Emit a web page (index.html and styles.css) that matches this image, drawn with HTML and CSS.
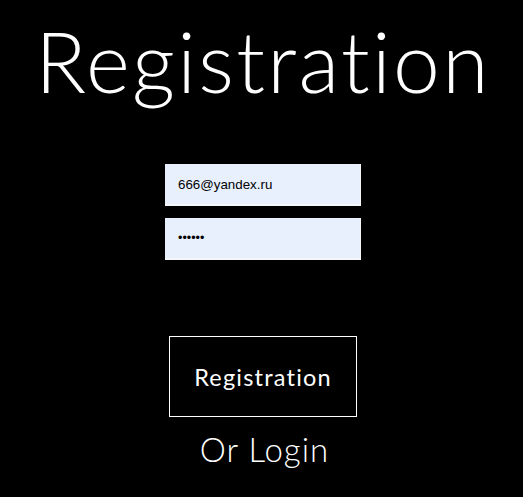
FILE: index.html
```html
<!DOCTYPE html>
<html>
<head>
<meta charset="utf-8">
<link rel="stylesheet" href="styles.css">
</head>
<body>
<main class="page">
  <h1 class="title">Registration</h1>
  <form class="form">
    <input class="field" type="text" value="666@yandex.ru">
    <input class="field field-pass" type="password" value="123456">
    <button class="btn" type="button">Registration</button>
    <a class="alt" href="#">Or Login</a>
  </form>
</main>
</body>
</html>
```

FILE: styles.css
```css
html, body {
  margin: 0;
  padding: 0;
  background: #000;
}
.page {
  display: flex;
  flex-direction: column;
  align-items: center;
  padding-left: 3px;
  font-family: "Lato", "DejaVu Sans", sans-serif;
  color: #fff;
}
.title {
  margin: 11px 0 0;
  font-size: 84px;
  line-height: 100px;
  font-weight: 300;
  letter-spacing: 2.3px;
}
.form {
  display: flex;
  flex-direction: column;
  align-items: center;
  margin-top: 53px;
}
.field {
  box-sizing: border-box;
  width: 196px;
  height: 42px;
  margin: 0 0 12px;
  padding: 0 12px 0 13px;
  border: 0;
  border-right: 1px solid #f4f6fa;
  border-bottom: 2px solid #f4f6fa;
  background: #e8f0fe;
  color: #000;
  font-family: "Liberation Sans", Arial, sans-serif;
  font-size: 13.33px;
  outline: none;
}
.field-pass {
  font-size: 12.5px;
  letter-spacing: 0;
}
.btn {
  box-sizing: border-box;
  margin-top: 64px;
  width: 188px;
  height: 81px;
  background: #000;
  border: 1px solid #fff;
  color: #fff;
  font-family: "Lato", "DejaVu Sans", sans-serif;
  font-size: 23.5px;
  font-weight: 400;
  letter-spacing: 1.2px;
  cursor: pointer;
}
.alt {
  margin-top: 12px;
  margin-left: 3px;
  color: #fff;
  text-decoration: none;
  font-size: 33px;
  line-height: 40px;
  font-weight: 300;
  letter-spacing: 1px;
}
```
